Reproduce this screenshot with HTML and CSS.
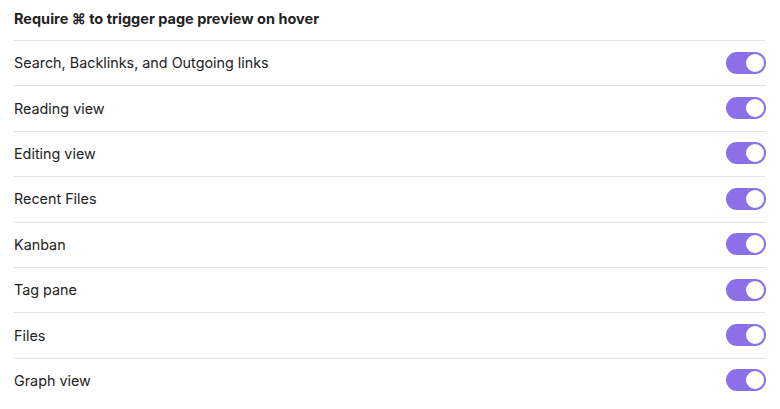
FILE: index.html
```html
<!DOCTYPE html>
<html lang="en">
<head>
<meta charset="utf-8">
<title>Page preview settings</title>
<link rel="stylesheet" href="styles.css">
</head>
<body>
<div class="settings">
  <div class="heading">Require ⌘ to trigger page preview on hover</div>
  <div class="row"><span class="label">Search, Backlinks, and Outgoing links</span><span class="toggle"><span class="knob"></span></span></div>
  <div class="row"><span class="label">Reading view</span><span class="toggle"><span class="knob"></span></span></div>
  <div class="row"><span class="label">Editing view</span><span class="toggle"><span class="knob"></span></span></div>
  <div class="row"><span class="label">Recent Files</span><span class="toggle"><span class="knob"></span></span></div>
  <div class="row"><span class="label">Kanban</span><span class="toggle"><span class="knob"></span></span></div>
  <div class="row"><span class="label">Tag pane</span><span class="toggle"><span class="knob"></span></span></div>
  <div class="row"><span class="label">Files</span><span class="toggle"><span class="knob"></span></span></div>
  <div class="row"><span class="label">Graph view</span><span class="toggle"><span class="knob"></span></span></div>
</div>
</body>
</html>
```
FILE: styles.css
```css
html, body {
  margin: 0;
  padding: 0;
  background: #ffffff;
}
body {
  font-family: Inter, "Noto Sans", "Liberation Sans", sans-serif;
  color: #222222;
  font-size: 14px;
}
.settings {
  width: 752px;
  margin-left: 14px;
  display: flex;
  flex-direction: column;
}
.heading {
  height: 40px;
  box-sizing: border-box;
  padding-bottom: 4px;
  display: flex;
  align-items: center;
  font-weight: 700;
  font-size: 14.5px;
}
.row {
  height: 45.4px;
  box-sizing: border-box;
  border-top: 1px solid #e3e3e3;
  display: flex;
  align-items: center;
  justify-content: space-between;
  padding-bottom: 1px;
}
.label {
  font-size: 14.35px;
}
.toggle {
  width: 40px;
  height: 22px;
  border-radius: 11px;
  background: #8c70e8;
  box-sizing: border-box;
  padding: 2px;
  display: flex;
  justify-content: flex-end;
}
.knob {
  width: 18px;
  height: 18px;
  border-radius: 50%;
  background: #ffffff;
}
```
